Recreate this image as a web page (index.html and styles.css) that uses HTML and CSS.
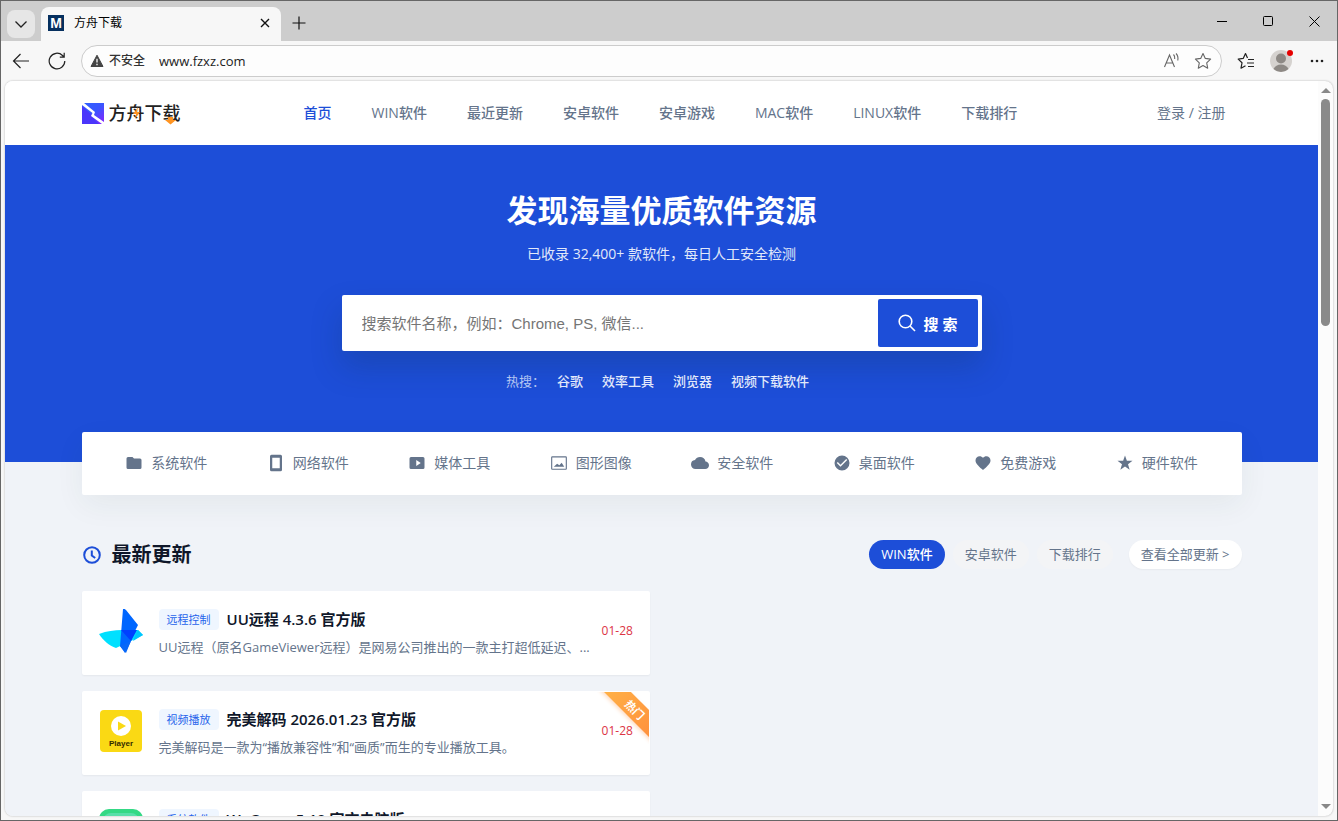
FILE: index.html
```html
<!DOCTYPE html>
<html lang="zh-CN">
<head>
  <meta charset="UTF-8">
  <meta name="viewport" content="width=device-width, initial-scale=1.0">
  <title>方舟下载</title>
  <link rel="stylesheet" href="styles.css">
</head>
<body>
  <!-- 标签栏 -->
  <div class="tabbar">
    <button class="tab-menu" aria-label="标签菜单">
      <svg width="14" height="14" viewBox="0 0 14 14" fill="none" stroke="#222" stroke-width="1.3"><path d="M1.5 4.5L7 10l5.500-5.500"/></svg>
    </button>
    <div class="tab">
      <span class="favicon">M</span>
      <span class="tab-title">方舟下载</span>
      <button class="tab-close" aria-label="关闭标签">
        <svg width="10" height="10" viewBox="0 0 10 10" stroke="#111" stroke-width="1.400"><path d="M1 1l8 8M9 1l-8 8"/></svg>
      </button>
    </div>
    <button class="tab-new" aria-label="新建标签">
      <svg width="14" height="14" viewBox="0 0 14 14" stroke="#111" stroke-width="1.200"><path d="M7 .5v13M.5 7h13"/></svg>
    </button>
    <div class="window-controls">
      <button aria-label="最小化"><svg width="11" height="11" viewBox="0 0 11 11" stroke="#000"><path d="M0 5.500h10"/></svg></button>
      <button aria-label="最大化"><svg width="11" height="11" viewBox="0 0 11 11" fill="none" stroke="#000"><rect x=".5" y=".5" width="9" height="9" rx="1"/></svg></button>
      <button aria-label="关闭"><svg width="11" height="11" viewBox="0 0 11 11" stroke="#000"><path d="M.5.5l10 10M10.500.5l-10 10"/></svg></button>
    </div>
  </div>

  <!-- 地址栏 -->
  <div class="toolbar">
    <button aria-label="返回">
      <svg width="18" height="18" viewBox="0 0 18 18" fill="none" stroke="#222" stroke-width="1.200"><path d="M17 9H1.500M8.500 2l-7 7 7 7"/></svg>
    </button>
    <button aria-label="刷新">
      <svg width="18" height="18" viewBox="0 0 18 18" fill="none" stroke="#222" stroke-width="1.200"><path d="M16.800 9A7.800 7.800 0 1 1 14.500 3.500L16 5M16.200.8V5.200H11.800"/></svg>
    </button>
    <div class="address">
      <svg width="14" height="14" viewBox="0 0 14 14"><path d="M7 1.200L13 12.500H1z" fill="#444" stroke="#444" stroke-linejoin="round"/><path d="M7 4.800v3.800M7 9.800v1.400" stroke="#fff" stroke-width="1.300"/></svg>
      <span class="insecure">不安全</span>
      <input class="url" type="text" aria-label="地址" value="www.fzxz.com">
      <button aria-label="朗读">
        <svg width="18" height="16" viewBox="0 0 18 16" fill="none" stroke="#666" stroke-width="1.100"><path d="M1.500 14L6.500 2l5 12M3.200 10h6.600M10.500 1.500c1 1 1.500 2.500 1.200 4.500M13 .5c1.800 1.800 2.300 4.200 1.800 7"/></svg>
      </button>
      <button aria-label="收藏">
        <svg width="18" height="18" viewBox="0 0 18 18" fill="none" stroke="#666" stroke-width="1.100" stroke-linejoin="round"><path d="M9 1.500l2.300 4.900 5.300.7-3.900 3.700 1 5.400L9 13.600l-4.700 2.600 1-5.400L1.400 7.100l5.300-.7z"/></svg>
      </button>
    </div>
    <button class="tool" aria-label="收藏夹">
      <svg width="18" height="18" viewBox="0 0 18 18" fill="none" stroke="#222" stroke-width="1.200" stroke-linejoin="round"><path d="M10.500 6L8.500 1.500 6.200 6.400l-5 .7L5 10.800l-1 5.400 4.500-2.500M11 7.500h6M10 11h7M11 14.500h6"/></svg>
    </button>
    <button class="tool avatar" aria-label="个人资料">
      <svg width="22" height="22" viewBox="0 0 22 22"><circle cx="11" cy="11" r="11" fill="#d5d2cf"/><circle cx="11" cy="8.500" r="5" fill="#8d8985"/><path d="M3.500 19c1.500-3 4-4.500 7.500-4.500s6 1.500 7.500 4.500a11 11 0 0 1-15 0z" fill="#8d8985"/></svg>
      <span class="dot"></span>
    </button>
    <button aria-label="更多">
      <svg width="14" height="4" viewBox="0 0 14 4" fill="#222"><circle cx="2" cy="2" r="1.300"/><circle cx="7" cy="2" r="1.300"/><circle cx="12" cy="2" r="1.300"/></svg>
    </button>
  </div>

  <div class="viewport">
    <div class="page">
      <header class="header">
        <div class="container header-inner">
          <a class="logo" href="#">
            <svg width="22" height="22" viewBox="0 0 22 22">
              <defs><linearGradient id="lg" x1="0" y1="0" x2="1" y2="1"><stop offset="0" stop-color="#2f62ff"/><stop offset=".5" stop-color="#3a55ff"/><stop offset="1" stop-color="#8a22ff"/></linearGradient></defs>
              <path d="M0 1h22v21H0z" fill="url(#lg)"/>
              <path d="M0 4l10 9 1 3 6 6H0z" fill="#4b35fb"/>
              <path d="M0 1h2l11 9-1 3 10 7v2h-2L9 14l1.500-3L0 3z" fill="#fff"/>
            </svg>
            <span class="logo-text">方舟下载
              <svg class="logo-accent" width="73" height="26" viewBox="0 0 73 26"><path d="M29 7l-5 7h3l-1 5 5-7h-3z" fill="#ff9422"/><path d="M59 17h5v3h3l-5.500 4.500L56 20h3z" fill="#ff9422"/></svg>
            </span>
          </a>
          <nav class="nav">
            <a class="active" href="#">首页</a>
            <a href="#">WIN软件</a>
            <a href="#">最近更新</a>
            <a href="#">安卓软件</a>
            <a href="#">安卓游戏</a>
            <a href="#">MAC软件</a>
            <a href="#">LINUX软件</a>
            <a href="#">下载排行</a>
          </nav>
          <a class="login" href="#">登录 / 注册</a>
        </div>
      </header>

      <section class="hero">
        <h1>发现海量优质软件资源</h1>
        <p>已收录 32,400+ 款软件，每日人工安全检测</p>
        <form class="search">
          <input type="text" aria-label="搜索软件" placeholder="搜索软件名称，例如：Chrome, PS, 微信...">
          <button type="button">
            <svg width="18" height="18" viewBox="0 0 18 18" fill="none" stroke="#fff" stroke-width="1.600"><circle cx="7.500" cy="7.500" r="6.300"/><path d="M12 12l5 5"/></svg>
            搜 索
          </button>
        </form>
        <div class="hot">
          <span>热搜：</span>
          <a href="#">谷歌</a>
          <a href="#">效率工具</a>
          <a href="#">浏览器</a>
          <a href="#">视频下载软件</a>
        </div>
      </section>

      <main class="container">
        <!-- 分类 -->
        <div class="categories">
          <a href="#"><svg viewBox="0 0 24 24"><path d="M10 4H4a2 2 0 0 0-2 2v12a2 2 0 0 0 2 2h16a2 2 0 0 0 2-2V8a2 2 0 0 0-2-2h-8z"/></svg>系统软件</a>
          <a href="#"><svg viewBox="0 0 24 24"><path d="M18 1H6a2 2 0 0 0-2 2v18a2 2 0 0 0 2 2h12a2 2 0 0 0 2-2V3a2 2 0 0 0-2-2zm-1 18H7V5h10z"/></svg>网络软件</a>
          <a href="#"><svg viewBox="0 0 24 24"><path d="M20 4H4a2 2 0 0 0-2 2v12a2 2 0 0 0 2 2h16a2 2 0 0 0 2-2V6a2 2 0 0 0-2-2zm-9 12V8l6 4z"/></svg>媒体工具</a>
          <a href="#"><svg viewBox="0 0 24 24"><path d="M21 4.500v15H3v-15h18m0-1.500H3a1.500 1.500 0 0 0-1.500 1.500v15A1.500 1.500 0 0 0 3 21h18a1.500 1.500 0 0 0 1.500-1.500v-15A1.500 1.500 0 0 0 21 3zm-5.500 8.500l-3 3.500L9.500 13 5 17h14z"/></svg>图形图像</a>
          <a href="#"><svg viewBox="0 0 24 24"><path d="M19.350 10.040A7.490 7.490 0 0 0 12 4C9.110 4 6.600 5.640 5.350 8.040A5.994 5.994 0 0 0 0 14c0 3.310 2.690 6 6 6h13c2.760 0 5-2.240 5-5 0-2.640-2.050-4.780-4.650-4.960z"/></svg>安全软件</a>
          <a href="#"><svg viewBox="0 0 24 24"><path d="M12 2a10 10 0 1 0 0 20 10 10 0 0 0 0-20zm-2 15l-5-5 1.410-1.410L10 14.170l7.590-7.590L19 8z"/></svg>桌面软件</a>
          <a href="#"><svg viewBox="0 0 24 24"><path d="M12 21.350l-1.450-1.320C5.400 15.360 2 12.280 2 8.500 2 5.420 4.420 3 7.500 3c1.740 0 3.410.81 4.500 2.090C13.090 3.810 14.760 3 16.500 3 19.580 3 22 5.420 22 8.500c0 3.780-3.400 6.860-8.550 11.540z"/></svg>免费游戏</a>
          <a href="#"><svg viewBox="0 0 24 24"><path d="M12 2l2.500 7H22l-6 4.600L18.200 21 12 16.700 5.800 21 8 13.600 2 9h7.500z"/></svg>硬件软件</a>
        </div>

        <!-- 最新更新 -->
        <div class="section-head">
          <h2>
            <svg width="20" height="20" viewBox="0 0 20 20" fill="none" stroke="#1d4ed8" stroke-width="2"><circle cx="10" cy="10" r="7.800"/><path d="M9.800 5.500V10.500l3.400 2.500"/></svg>
            最新更新
          </h2>
          <div class="tabs">
            <button class="pill active">WIN软件</button>
            <button class="pill">安卓软件</button>
            <button class="pill">下载排行</button>
            <a class="pill more" href="#">查看全部更新 &gt;</a>
          </div>
        </div>

        <div class="list">
          <a class="card" href="#">
            <svg class="app-icon" viewBox="0 0 44 44">
              <path d="M0 25c8-3 15-4 23-4h16l5 5-12 6-15 7C10 37 4 31 0 25z" fill="#00e0ff"/>
              <path d="M24 0c1-.5 2 0 3 1l12 15-4 8-3 8-6 12-5-7 1-12z" fill="#0066ff"/>
              <path d="M22 21h16l-6 11z" fill="#0040ff"/>
              <path d="M39 21l5 5-10 6 3-8z" fill="#00c6ff"/>
              <path d="M32 32l-5 12-6-7z" fill="#0868f8"/>
            </svg>
            <div class="info">
              <div class="title-row"><span class="tag">远程控制</span><h3>UU远程 4.3.6 官方版</h3></div>
              <p>UU远程（原名GameViewer远程）是网易公司推出的一款主打超低延迟、...</p>
            </div>
            <time>01-28</time>
          </a>
          <a class="card" href="#">
            <svg class="app-icon" viewBox="0 0 44 44">
              <rect x="1" y="1" width="42" height="42" rx="4" fill="#fad914"/>
              <circle cx="22" cy="17" r="10" fill="#fff"/>
              <path d="M19 12.500l8 4.500-8 4.500z" fill="#fad914"/>
              <text class="icon-label" x="22" y="37" text-anchor="middle">Player</text>
            </svg>
            <div class="info">
              <div class="title-row"><span class="tag">视频播放</span><h3>完美解码 2026.01.23 官方版</h3></div>
              <p>完美解码是一款为“播放兼容性”和“画质”而生的专业播放工具。</p>
            </div>
            <time>01-28</time>
            <span class="ribbon-box"><span class="ribbon">热门</span></span>
          </a>
          <a class="card" href="#">
            <svg class="app-icon" viewBox="0 0 44 44"><rect width="44" height="44" rx="10" fill="#34d985"/><rect x="4" y="4" width="36" height="38" rx="8" fill="#58dfa9"/></svg>
            <div class="info">
              <div class="title-row"><span class="tag">系统软件</span><h3>WeGame 5.10 官方电脑版</h3></div>
              <p></p>
            </div>
          </a>
        </div>
      </main>
    </div>
    <div class="scrollbar"><span class="arrow up"></span><span class="thumb"></span><span class="arrow down"></span></div>
  </div>
</body>
</html>
```
FILE: styles.css
```css
* {
  box-sizing: border-box;
}

body {
  margin: 0;
  height: 100vh;
  display: flex;
  flex-direction: column;
  overflow: hidden;
  border: 1px solid #666;
  background-color: #f7f7f7;
  font-family: "Open Sans", "Noto Sans CJK SC", sans-serif;
  font-size: 14px;
  line-height: 20px;
}

a {
  color: inherit;
  text-decoration: none;
}

button {
  border: none;
  padding: 0;
  background: none;
  font-family: inherit;
  cursor: pointer;
}

h1, h2, h3, p {
  margin: 0;
}

svg {
  display: block;
  flex-shrink: 0;
}

/* 浏览器标签栏 */
.tabbar {
  display: flex;
  height: 40px;
  padding-left: 6px;
  background-color: #cdcdcd;
  flex-shrink: 0;
}

.tab-menu {
  width: 28px;
  height: 28px;
  margin-top: 9px;
  border-radius: 8px;
  background-color: #e6e6e6;
  display: flex;
  align-items: center;
  justify-content: center;
}

.tab {
  width: 240px;
  margin: 6px 0 0 6px;
  padding: 0 11px 2px 7px;
  border-radius: 8px 8px 0 0;
  background-color: #f7f7f7;
  display: flex;
  align-items: center;
  font-size: 12px;
}

.favicon {
  width: 16px;
  height: 16px;
  margin-right: 10px;
  background-color: #06305f;
  color: #fff;
  font-family: "Liberation Sans", sans-serif;
  font-size: 14px;
  font-weight: bold;
  line-height: 16px;
  text-align: center;
}

.tab-close {
  margin-left: auto;
}

.tab-new {
  margin: 4px 0 0 11px;
}

.window-controls {
  display: flex;
  margin-left: auto;
}

.window-controls button {
  width: 46px;
  display: flex;
  align-items: center;
  justify-content: center;
}

.toolbar {
  display: flex;
  align-items: center;
  height: 40px;
  padding: 0 13px 0 11px;
  gap: 18px;
  flex-shrink: 0;
}

.address {
  flex: 1;
  height: 32px;
  margin-left: -3px;
  padding: 0 9px 0 8px;
  border: 1px solid #ccc;
  border-radius: 16px;
  background-color: #fdfdfd;
  display: flex;
  align-items: center;
  font-size: 12px;
}

.insecure {
  margin: 0 12px 0 5px;
  color: #333;
  font-weight: 500;
}

.url {
  flex: 1;
  border: none;
  outline: none;
  background: none;
  color: #222;
  font-family: "Open Sans", sans-serif;
  font-size: 13px;
}

.address button + button {
  margin-left: 13px;
}

.toolbar .tool {
  margin-left: -3px;
}

.avatar {
  position: relative;
}

.dot {
  position: absolute;
  top: 0;
  right: -1px;
  width: 6px;
  height: 6px;
  border-radius: 50%;
  background-color: #e60000;
}

/* 网页区域 */
.viewport {
  flex: 1;
  min-height: 0;
  display: flex;
  margin: 0 4px 4px;
  border-radius: 8px;
  background-color: #fcfcfc;
  box-shadow: 0 0 2px #aaa;
  overflow: hidden;
}

.page {
  flex: 1;
  min-width: 0;
  overflow: hidden;
  background-color: #f0f3f8;
}

.scrollbar {
  width: 15px;
  padding: 7px 0;
  display: flex;
  flex-direction: column;
  align-items: center;
}

.arrow {
  border: 5px solid transparent;
}

.arrow.up {
  border-top: none;
  border-bottom-color: #888;
}

.arrow.down {
  margin-top: auto;
  border-bottom: none;
  border-top-color: #888;
}

.thumb {
  width: 9px;
  height: 227px;
  margin-top: 6px;
  border-radius: 5px;
  background-color: #8a8a8a;
}

.container {
  max-width: 1160px;
  margin: 0 auto;
}

.header {
  background-color: #fff;
}

.header-inner {
  display: flex;
  align-items: center;
  height: 64px;
  padding-right: 16px;
  color: #64748b;
}

.logo {
  display: flex;
  align-items: center;
  gap: 5px;
}

.logo-text {
  position: relative;
  color: #222;
  font-size: 18px;
  font-weight: 500;
  line-height: 26px;
}

.logo-accent {
  position: absolute;
  top: 0;
  left: 0;
}

.nav {
  display: flex;
  gap: 40px;
  margin-left: 123px;
  font-weight: 500;
}

.nav .active {
  color: #1d4ed8;
}

.login {
  margin-left: auto;
}

/* 搜索区 */
.hero {
  height: 317px;
  padding-top: 43px;
  background-color: #1d4ed8;
  color: #fff;
  text-align: center;
}

.hero h1 {
  font-size: 31px;
  font-weight: bold;
  line-height: 44px;
}

.hero p {
  margin-top: 12px;
  color: #e2e9fa;
}

.search {
  display: flex;
  max-width: 640px;
  height: 56px;
  margin: 31px auto 20px;
  padding: 4px;
  border-radius: 2px;
  background-color: #fff;
  box-shadow: 0 16px 30px rgba(15, 50, 90, 0.25);
}

.search input {
  flex: 1;
  padding: 0 16px;
  border: none;
  outline: none;
  font-family: "Liberation Sans", "Noto Sans CJK SC", sans-serif;
  font-size: 15px;
}

.search input::placeholder {
  color: #757575;
}

.search button {
  width: 100px;
  border-radius: 2px;
  background-color: #1d4ed8;
  color: #fff;
  font-size: 15px;
  font-weight: bold;
  display: flex;
  align-items: center;
  justify-content: center;
  gap: 8px;
}

.hot {
  display: flex;
  justify-content: center;
  gap: 19px;
  padding-right: 8px;
  font-size: 13px;
  color: #e2e9fa;
  font-weight: 500;
}

.hot span {
  margin-right: -7px;
  color: #b4c5f2;
  font-weight: 400;
}

/* 分类条 */
.categories {
  position: relative;
  display: flex;
  height: 63px;
  margin-top: -30px;
  padding: 0 14px 2px;
  border-radius: 2px;
  background-color: #fff;
  box-shadow: 0 10px 30px rgba(30, 60, 50, 0.06);
  color: #64748b;
}

.categories a {
  flex: 1;
  display: flex;
  align-items: center;
  justify-content: center;
  gap: 8px;
}

.categories svg {
  width: 18px;
  height: 18px;
  fill: #64748b;
}

.section-head {
  display: flex;
  align-items: center;
  justify-content: space-between;
  margin: 45px 0 22px;
}

.section-head h2 {
  display: flex;
  align-items: center;
  gap: 10px;
  color: #0f172a;
  font-size: 20px;
  line-height: 29px;
}

.tabs {
  display: flex;
  gap: 8px;
}

.pill {
  padding: 4px 12px;
  border-radius: 15px;
  background-color: #f3f4f6;
  color: #64748b;
  font-size: 13px;
  line-height: 21px;
}

.pill.active {
  background-color: #1d4ed8;
  color: #fff;
  font-weight: 500;
}

.pill.more {
  margin-left: 8px;
  background-color: #fff;
  box-shadow: 0 1px 2px rgba(0, 0, 0, 0.04);
}

/* 软件列表 */
.list {
  display: grid;
  grid-template-columns: 1fr;
  gap: 16px;
  width: 49%;
}

.card {
  position: relative;
  display: flex;
  align-items: center;
  gap: 16px;
  height: 84px;
  padding: 0 17px;
  border-radius: 2px;
  background-color: #fff;
  box-shadow: 0 1px 2px rgba(0, 0, 0, 0.05);
}

.app-icon {
  width: 44px;
  height: 44px;
  margin-bottom: 5px;
}

.icon-label {
  fill: #332d00;
  font-family: "Liberation Sans", sans-serif;
  font-size: 8px;
  font-weight: bold;
}

.info {
  flex: 1;
  min-width: 0;
}

.title-row {
  display: flex;
  align-items: center;
  gap: 8px;
  margin-bottom: 7px;
}

.tag {
  padding: 0 8px;
  border-radius: 4px;
  background-color: #eff6ff;
  color: #2563eb;
  font-size: 11px;
  line-height: 21px;
}

.card h3 {
  color: #0f172a;
  font-size: 15px;
  font-weight: 600;
  line-height: 21px;
}

.card p {
  height: 20px;
  color: #64748b;
  font-size: 13px;
  white-space: nowrap;
}

.card time {
  margin-bottom: 5px;
  color: #dc3545;
  font-size: 12px;
  font-weight: 500;
}

.ribbon-box {
  position: absolute;
  top: 1px;
  right: 1px;
  width: 52px;
  height: 52px;
  overflow: hidden;
}

.ribbon {
  position: absolute;
  top: 8px;
  right: -26px;
  width: 80px;
  background: linear-gradient(90deg, #ffb347, #ff8c3c);
  box-shadow: 0 2px 4px rgba(255, 140, 60, 0.3);
  color: #fff;
  font-size: 11px;
  font-weight: bold;
  line-height: 19px;
  text-align: center;
  transform: rotate(45deg);
}
```
